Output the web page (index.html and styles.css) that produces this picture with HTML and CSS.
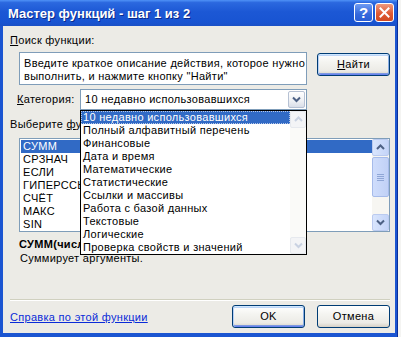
FILE: index.html
```html
<!DOCTYPE html>
<html lang="ru">
<head>
<meta charset="utf-8">
<title>Мастер функций</title>
<link rel="stylesheet" href="styles.css">
</head>
<body>
<div class="window">
  <div class="titlebar">
    <span class="title">Мастер функций - шаг 1 из 2</span>
    <div class="tbtns">
      <span class="tb help">?</span>
      <span class="tb close"><svg width="11" height="11" viewBox="0 0 11 11"><path d="M1.5 1.5 L9.5 9.5 M9.5 1.5 L1.5 9.5" stroke="#fff" stroke-width="2" stroke-linecap="square"/></svg></span>
    </div>
  </div>
  <div class="client">
    <div class="label"><u>П</u>оиск функции:</div>
    <div class="search-row">
      <div class="searchbox">Введите краткое описание действия, которое нужно<br>выполнить, и нажмите кнопку "Найти"</div>
      <div class="btn default"><span><u>Н</u>айти</span></div>
    </div>
    <div class="cat-row">
      <span class="cat-label"><u>К</u>атегория:</span>
      <div class="select">
        <span class="select-text">10 недавно использовавшихся</span>
        <span class="combo-btn"><svg width="9" height="7" viewBox="0 0 9 7"><path d="M1 1.5 L4.5 5 L8 1.5" fill="none" stroke="#4D6185" stroke-width="2"/></svg></span>
        <div class="dropdown">
          <div class="dd-items">
            <div class="item sel">10 недавно использовавшихся</div>
            <div class="item">Полный алфавитный перечень</div>
            <div class="item">Финансовые</div>
            <div class="item">Дата и время</div>
            <div class="item">Математические</div>
            <div class="item">Статистические</div>
            <div class="item">Ссылки и массивы</div>
            <div class="item">Работа с базой данных</div>
            <div class="item">Текстовые</div>
            <div class="item">Логические</div>
            <div class="item">Проверка свойств и значений</div>
          </div>
          <div class="dd-scroll">
            <span class="sb-btn off"><svg width="9" height="7" viewBox="0 0 9 7"><path d="M1 5 L4.5 1.5 L8 5" fill="none" stroke="#C9D2E2" stroke-width="2"/></svg></span>
            <span class="sb-btn off"><svg width="9" height="7" viewBox="0 0 9 7"><path d="M1 1.5 L4.5 5 L8 1.5" fill="none" stroke="#C9D2E2" stroke-width="2"/></svg></span>
          </div>
        </div>
      </div>
    </div>
    <div class="label label2">Выберите <u>ф</u>ункцию:</div>
    <div class="funclist">
      <div class="fl-items">
        <div class="item sel">СУММ</div>
        <div class="item">СРЗНАЧ</div>
        <div class="item">ЕСЛИ</div>
        <div class="item">ГИПЕРССЫЛКА</div>
        <div class="item">СЧЁТ</div>
        <div class="item">МАКС</div>
        <div class="item">SIN</div>
      </div>
      <div class="vscroll">
        <span class="sb-btn"><svg width="9" height="7" viewBox="0 0 9 7"><path d="M1 5 L4.5 1.5 L8 5" fill="none" stroke="#4D6185" stroke-width="2"/></svg></span>
        <span class="thumb"><span class="grip"></span><span class="grip"></span><span class="grip"></span><span class="grip"></span></span>
        <span class="track"></span>
        <span class="sb-btn"><svg width="9" height="7" viewBox="0 0 9 7"><path d="M1 1.5 L4.5 5 L8 1.5" fill="none" stroke="#4D6185" stroke-width="2"/></svg></span>
      </div>
    </div>
    <div class="sig">СУММ(число1;число2;...)</div>
    <div class="desc">Суммирует аргументы.</div>
    <div class="sep"></div>
    <div class="bottom-row">
      <a class="help-link" href="#">Справка по этой функции</a>
      <div class="btn default"><span>OK</span></div>
      <div class="btn"><span>Отмена</span></div>
    </div>
  </div>
</div>
</body>
</html>
```

FILE: styles.css
```css
* { box-sizing: border-box; }
html, body { margin: 0; padding: 0; }
body {
  width: 401px;
  height: 337px;
  overflow: hidden;
  background: #F4F4F2;
  font-family: "Liberation Sans", Arial, sans-serif;
  font-size: 11px;
  line-height: 13px;
  letter-spacing: 0.3px;
  color: #000;
}
.window {
  width: 398px;
  height: 337px;
  display: flex;
  flex-direction: column;
  background: #1B55D1;
  border-right: 1px solid #0A2E9A;
}
.titlebar {
  height: 26px;
  flex: none;
  display: flex;
  align-items: center;
  padding: 0 3px 0 8px;
  background: linear-gradient(to bottom, #4F92F7 0%, #2B68DF 10%, #1C58D5 45%, #1854D2 85%, #1A50C6 100%);
}
.title {
  flex: 1;
  color: #fff;
  font-weight: bold;
  font-size: 13px;
  letter-spacing: 0;
  text-shadow: 1px 1px 0 #0B2A8A;
  margin-top: 1px;
}
.tbtns { display: flex; gap: 2px; margin-top: -1px; }
.tb {
  width: 19px;
  height: 19px;
  border: 1px solid #fff;
  border-radius: 3px;
  display: flex;
  align-items: center;
  justify-content: center;
}
.help {
  background: linear-gradient(to bottom, #6E9BF2, #3569DC 60%, #2A5ED6);
  color: #fff;
  font-weight: bold;
  font-size: 15px;
  letter-spacing: 0;
}
.close {
  background: linear-gradient(to bottom, #EE9A80, #DF5A34 55%, #D14A22);
}
.client {
  flex: 1;
  margin: 0 2px 4px 3px;
  background: #ECEBE6;
  padding: 8px 5px 0 7px;
  display: flex;
  flex-direction: column;
}
.label { height: 13px; }
.search-row {
  margin: 5px 0 0 9px;
  display: flex;
  align-items: flex-start;
  gap: 10px;
}
.searchbox {
  width: 288px;
  height: 33px;
  border: 1px solid #7F9DB9;
  background: #fff;
  padding: 4px 0 0 4px;
  white-space: nowrap;
  overflow: hidden;
}
.btn {
  width: 73px;
  height: 23px;
  border: 1px solid #003C74;
  border-radius: 3px;
  background: linear-gradient(to bottom, #FFFFFF 0%, #F4F4F0 40%, #ECEBE6 80%, #D6D0C5 100%);
  display: flex;
  align-items: center;
  justify-content: center;
  flex: none;
}
.btn.default {
  box-shadow: inset 0 1px 0 #CEE7FF, inset 1px 0 0 #B8D0F6, inset -1px 0 0 #89ADE4, inset 0 -1px 0 #6982EE, inset 0 2px 0 #BCD4F6, inset 0 -2px 0 #7D99E0;
}
.search-row .btn { margin-top: 1px; }
.cat-row {
  margin: 4px 0 0 7px;
  display: flex;
  align-items: center;
  height: 21px;
}
.cat-label { width: 63px; }
.select {
  position: relative;
  width: 227px;
  height: 21px;
  border: 1px solid #7F9DB9;
  background: #fff;
  display: flex;
  align-items: center;
  padding-left: 4px;
}
.select-text { flex: 1; }
.combo-btn {
  width: 17px;
  height: 17px;
  margin-right: 1px;
  border: 1px solid #B6C1D3;
  border-radius: 2px;
  background: linear-gradient(to bottom, #FFFFFF, #EEF0F4 60%, #D9DEE8);
  display: flex;
  align-items: center;
  justify-content: center;
}
.dropdown {
  position: absolute;
  left: -1px;
  top: 20px;
  width: 227px;
  height: 145px;
  border: 1px solid #000;
  background: #fff;
  display: flex;
  z-index: 5;
}
.dd-items { flex: 1; }
.item { height: 13px; line-height: 13px; padding-left: 2px; white-space: nowrap; overflow: hidden; }
.item.sel { background: #316AC5; color: #fff; }
.dd-items .item.sel { outline: 1px dotted #B7C8E8; outline-offset: -1px; }
.dd-scroll {
  width: 16px;
  background: #FAFAF8;
  display: flex;
  flex-direction: column;
  justify-content: space-between;
}
.sb-btn {
  width: 16px;
  height: 17px;
  border: 1px solid #BBCBF0;
  border-radius: 2px;
  background: linear-gradient(to right, #D9E5FD, #C4D4F8);
  display: flex;
  align-items: center;
  justify-content: center;
}
.sb-btn.off {
  background: #F3F4F6;
  border-color: #E6E9EE;
}
.label2 { margin-top: 8px; }
.funclist {
  margin: 7px 0 0 9px;
  width: 371px;
  height: 94px;
  border: 1px solid #7F9DB9;
  background: #fff;
  display: flex;
  padding: 1px 0 0 1px;
}
.fl-items { flex: 1; }
.fl-items .item { padding-left: 2px; }
.vscroll {
  width: 17px;
  margin-top: -1px;
  background: #F7F6F2;
  display: flex;
  flex-direction: column;
}
.vscroll .sb-btn { width: 17px; height: 17px; }
.thumb {
  height: 40px;
  border: 1px solid #A6BBEA;
  border-radius: 2px;
  background: linear-gradient(to right, #CFDDFC, #C1D1F6);
  display: flex;
  flex-direction: column;
  align-items: center;
  justify-content: center;
  gap: 1px;
  margin-top: 1px;
}
.grip { width: 7px; height: 1px; background: #8FA6D6; }
.track { flex: 1; }
.sig { margin: 6px 0 0 9px; font-weight: bold; }
.desc { margin: 1px 0 0 10px; }
.sep {
  margin-top: 34px;
  height: 2px;
  border-top: 1px solid #D0D0BF;
  border-bottom: 1px solid #FFFFFF;
}
.bottom-row {
  margin-top: 4px;
  display: flex;
  align-items: center;
  gap: 12px;
}
.help-link {
  flex: 1;
  color: #0A2BD8;
  text-decoration: underline;
  margin-top: 2px;
}
```
